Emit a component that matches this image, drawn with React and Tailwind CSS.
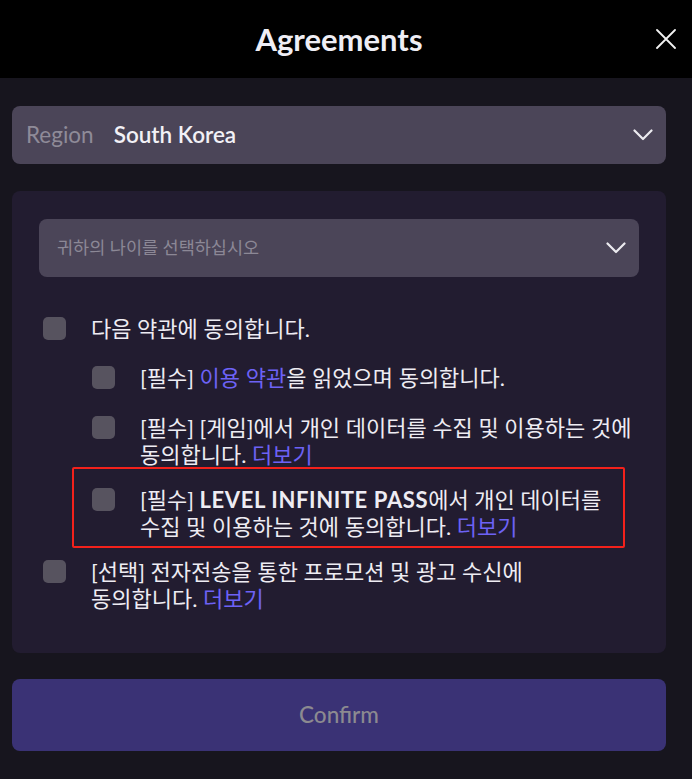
import React from 'react';

const Chevron = () => (
  <svg width="20" height="12" viewBox="0 0 20 12" fill="none" stroke="#ecebf0" strokeWidth="2.2" strokeLinecap="round" strokeLinejoin="round">
    <path d="M1.5 1.5 L10 10 L18.5 1.5" />
  </svg>
);

const Box = () => <span className="mt-[2px] h-[23px] w-[23px] shrink-0 rounded-[5px] bg-[#57535f]" />;

const Row = ({ children, className = '' }) => (
  <div className={`relative flex gap-[25px] ${className}`}>
    <Box />
    <p className="break-keep text-[22px] leading-[27px] text-[#eeecf3]">{children}</p>
  </div>
);

const More = ({ children = '더보기' }) => <span className="text-[#6d62f5]">{children}</span>;

export default function App() {
  return (
    <div className="min-h-[779px] w-full bg-[#17151e] font-['Lato','Noto_Sans_CJK_KR',sans-serif]">
      {/* header */}
      <div className="relative flex h-[78px] items-center justify-center bg-black pr-[14px]">
        <h1 className="text-[31px] font-bold text-[#efeef5]">Agreements</h1>
        <button className="absolute right-[16px] top-[29px]">
          <svg width="20" height="20" viewBox="0 0 20 20" stroke="#f2f2f2" strokeWidth="1.8" strokeLinecap="round">
            <path d="M1 1 L19 19 M19 1 L1 19" />
          </svg>
        </button>
      </div>

      <div className="pb-[28px] pl-[12px] pr-[26px] pt-[28px]">
        {/* region */}
        <div className="flex h-[58px] items-center rounded-[8px] bg-[#4b4558] pl-[14px] pr-[13px]">
          <span className="text-[22.5px] text-[#8f8b98]">Region</span>
          <span className="ml-[20px] text-[22.5px] font-semibold text-[#f2f1f6]">South Korea</span>
          <span className="ml-auto"><Chevron /></span>
        </div>

        {/* agreements card */}
        <div className="mt-[27px] rounded-[8px] bg-[#221c30] px-[27px] pb-[41px] pt-[28px]">
          <div className="flex h-[58px] items-center rounded-[8px] bg-[#4b4558] pl-[18px] pr-[13px]">
            <span className="text-[17.5px] text-[#8c8896]">귀하의 나이를 선택하십시오</span>
            <span className="ml-auto"><Chevron /></span>
          </div>

          <div className="mt-[38px] pl-[4px] pr-[51px]">
            <Row>다음 약관에 동의합니다.</Row>
            <div className="-mr-[49px] ml-[49px]">
              <Row className="mt-[22px]">
                [필수] <More>이용 약관</More>을 읽었으며 동의합니다.
              </Row>
              <Row className="mt-[23px]">
                [필수] [게임]에서 개인 데이터를 수집 및 이용하는 것에 동의합니다. <More />
              </Row>
              <Row className="mt-[18px]">
                [필수] <b className="font-bold tracking-[0.6px]">LEVEL INFINITE PASS</b>에서 개인 데이터를 수집 및 이용하는 것에 동의합니다. <More />
                <span className="pointer-events-none absolute bottom-[-8px] left-[-20px] right-[12px] top-[-19px] rounded-[2px] border-[2px] border-[#f3211b]" />
              </Row>
            </div>
            <Row className="mt-[18px]">
              [선택] 전자전송을 통한 프로모션 및 광고 수신에 동의합니다. <More />
            </Row>
          </div>
        </div>

        {/* confirm */}
        <button className="mt-[26px] flex h-[72px] w-full items-center justify-center rounded-[8px] bg-[#3a3275] text-[22.5px] font-medium text-[#8c8a90]">
          Confirm
        </button>
      </div>
    </div>
  );
}
